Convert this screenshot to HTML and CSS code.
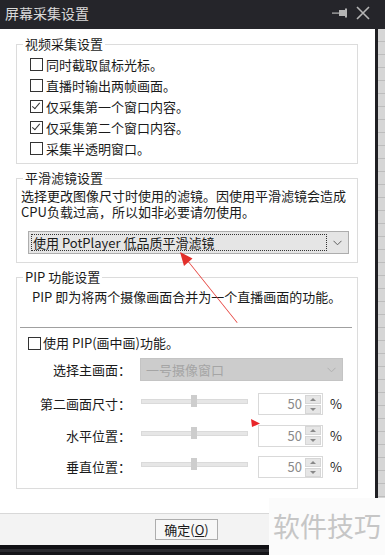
FILE: index.html
```html
<!DOCTYPE html>
<html lang="zh-CN">
<head>
    <meta charset="UTF-8">
    <meta name="viewport" content="width=device-width, initial-scale=1.0">
    <title>屏幕采集设置</title>
    <link rel="stylesheet" href="styles.css">
</head>
<body>
<div class="screen">
    <!-- 标题栏 -->
    <div class="titlebar">
        <span class="title">屏幕采集设置</span>
        <span class="tools">
            <svg class="pin" width="16" height="12" viewBox="0 0 16 12">
                <rect x="0" y="5.5" width="7" height="1.2" fill="#b5b5b5"/>
                <rect x="7" y="3" width="6" height="6" fill="#b5b5b5"/>
                <rect x="13" y="1.5" width="2" height="9" fill="#b5b5b5"/>
            </svg>
            <svg class="close" width="14" height="14" viewBox="0 0 14 14">
                <path d="M1 1 L13 13 M13 1 L1 13" stroke="#b5b5b5" stroke-width="1.6"/>
            </svg>
        </span>
    </div>

    <div class="middle">
        <div class="dialog">
            <div class="content">
                <!-- 视频采集 -->
                <fieldset class="group">
                    <legend>视频采集设置</legend>
                    <div class="checks">
                        <label class="check"><span class="box"></span>同时截取鼠标光标。</label>
                        <label class="check"><span class="box"></span>直播时输出两帧画面。</label>
                        <label class="check"><span class="box checked"></span>仅采集第一个窗口内容。</label>
                        <label class="check"><span class="box checked"></span>仅采集第二个窗口内容。</label>
                        <label class="check"><span class="box"></span>采集半透明窗口。</label>
                    </div>
                </fieldset>

                <!-- 平滑滤镜 -->
                <fieldset class="group group-filter">
                    <legend>平滑滤镜设置</legend>
                    <p class="desc">选择更改图像尺寸时使用的滤镜。因使用平滑滤镜会造成<br>CPU负载过高，所以如非必要请勿使用。</p>
                    <div class="combo">
                        <span class="combo-text">使用 PotPlayer 低品质平滑滤镜</span>
                        <svg class="chev" width="9" height="6" viewBox="0 0 9 6"><path d="M0.5 0.8 L4.5 4.8 L8.5 0.8" fill="none" stroke="#606060" stroke-width="1"/></svg>
                    </div>
                </fieldset>

                <!-- PIP -->
                <fieldset class="group group-pip">
                    <legend>PIP 功能设置</legend>
                    <p class="pip-desc">PIP 即为将两个摄像画面合并为一个直播画面的功能。</p>
                    <div class="sep"></div>
                    <label class="check check-pip"><span class="box"></span>使用 PIP(画中画)功能。</label>
                    <div class="field-row row-select">
                        <span class="lbl">选择主画面：</span>
                        <div class="combo combo-off">
                            <span class="combo-text">一号摄像窗口</span>
                            <svg class="chev" width="9" height="6" viewBox="0 0 9 6"><path d="M0.5 0.8 L4.5 4.8 L8.5 0.8" fill="none" stroke="#b0b0b0" stroke-width="1"/></svg>
                        </div>
                    </div>
                    <div class="sliders">
                        <div class="field-row">
                            <span class="lbl">第二画面尺寸：</span>
                            <div class="slider"><span class="track"></span><span class="thumb"></span></div>
                            <div class="spin"><span class="spin-val">50</span><span class="spin-btns"><span class="up"></span><span class="down"></span></span></div>
                            <span class="pct">%</span>
                        </div>
                        <div class="field-row">
                            <span class="lbl">水平位置：</span>
                            <div class="slider"><span class="track"></span><span class="thumb"></span></div>
                            <div class="spin"><span class="spin-val">50</span><span class="spin-btns"><span class="up"></span><span class="down"></span></span></div>
                            <span class="pct">%</span>
                        </div>
                        <div class="field-row">
                            <span class="lbl">垂直位置：</span>
                            <div class="slider"><span class="track"></span><span class="thumb"></span></div>
                            <div class="spin"><span class="spin-val">50</span><span class="spin-btns"><span class="up"></span><span class="down"></span></span></div>
                            <span class="pct">%</span>
                        </div>
                    </div>
                </fieldset>
            </div>
            <div class="footer">
                <button class="btn">确定(<u>O</u>)</button>
            </div>
        </div>
        <div class="edge"></div>
    </div>
    <div class="bottombar"></div>

    <!-- 红色标注 -->
    <svg class="marks" width="385" height="555" viewBox="0 0 385 555">
        <polygon points="180,252 192.5,258.5 184,266" fill="#e3302b"/>
        <polygon points="187,260.5 189.5,262.5 237.5,322.5 237,323" fill="#e3302b"/>
        <polygon points="251,419 260,423.5 252,427" fill="#e8262a"/>
    </svg>

    <div class="watermark">软件技巧</div>
</div>
</body>
</html>
```

FILE: styles.css
```css
/* Dasar */
body {
    margin: 0;
    font-family: "Noto Sans CJK SC", sans-serif;
    font-size: 13px;
    color: #1a1a1a;
}

.screen {
    position: relative;
    width: 385px;
    height: 555px;
    overflow: hidden;
    background-color: #ffffff;
}

/* Title bar */
.titlebar {
    height: 29px;
    background-color: #25252a;
    display: flex;
    align-items: center;
    justify-content: space-between;
}

.title {
    color: #dadada;
    font-size: 14px;
    line-height: 16px;
    margin-left: 5px;
    margin-top: -3px;
}

.tools {
    display: flex;
    align-items: center;
    margin-right: 15px;
    margin-top: -3px;
}

.pin {
    margin-right: 8px;
}

/* Badan dialog */
.middle {
    display: flex;
    height: 516px;
}

.dialog {
    width: 375px;
    display: flex;
    flex-direction: column;
}

.content {
    height: 484px;
    padding-top: 7px;
    box-sizing: border-box;
    background-color: #ffffff;
}

.edge {
    width: 7px;
    border-left: 3px solid #1f1f23;
    background: repeating-linear-gradient(180deg, #d6d6d6 0, #d6d6d6 12px, #bdbdbd 12px, #bdbdbd 13px);
}

/* Group box */
.group {
    margin: 0 17px 0 16px;
    padding: 0;
    border: 1px solid #dcdcdc;
    min-width: 0;
}

.group legend {
    margin-left: 6px;
    padding: 0 2px;
    line-height: 16px;
}

.group-filter,
.group-pip {
    margin-top: 6px;
}

.checks {
    padding: 2px 0 4px 13px;
}

.check {
    display: flex;
    align-items: center;
    height: 21px;
    line-height: 16px;
}

.box {
    width: 11px;
    height: 11px;
    border: 1px solid #333333;
    margin-right: 3px;
    position: relative;
    background-color: #ffffff;
}

.box.checked::after {
    content: "";
    position: absolute;
    left: 3px;
    top: 0px;
    width: 3px;
    height: 7px;
    border-right: 1px solid #333333;
    border-bottom: 1px solid #333333;
    transform: rotate(40deg);
}

/* Filter */
.desc {
    margin: 2px 0 0 4px;
    line-height: 16px;
    white-space: nowrap;
}

.combo {
    margin: 11px 0 8px 11px;
    width: 321px;
    height: 23px;
    box-sizing: border-box;
    border: 1px solid #adadad;
    background-color: #e5e5e5;
    display: flex;
    align-items: center;
    justify-content: space-between;
    padding: 0 6px 0 2px;
}

.combo-text {
    line-height: 17px;
    padding: 0 2px;
    width: 296px;
    box-sizing: border-box;
    outline: 1px dotted #333333;
    outline-offset: -1px;
}

/* PIP */
.pip-desc {
    margin: 4px 0 0 15px;
    line-height: 16px;
}

.sep {
    height: 1px;
    background-color: #a0a0a0;
    margin: 22px 5px 0 3px;
}

.check-pip {
    margin: 5px 0 0 11px;
    height: 20px;
}

.check-pip .box {
    margin-right: 2px;
}

.field-row {
    display: flex;
    align-items: center;
    height: 22px;
}

.row-select {
    height: 23px;
    margin-top: 5px;
}

.lbl {
    width: 114px;
    margin-right: 9px;
    text-align: right;
    line-height: 16px;
    white-space: nowrap;
}

.combo-off {
    margin: 0;
    width: 203px;
    border-color: #c4c4c4;
    background-color: #cccccc;
    padding-left: 3px;
}

.combo-off .combo-text {
    outline: none;
    color: #a5a5a5;
    width: auto;
}

.sliders {
    display: flex;
    flex-direction: column;
    gap: 9.5px;
    margin-top: 12px;
    padding-bottom: 10px;
}

.slider {
    position: relative;
    width: 107px;
    height: 22px;
    margin-left: 1px;
}

.track {
    position: absolute;
    left: 0;
    right: 0;
    top: 6px;
    height: 3px;
    background-color: #e6e6e6;
    border: 1px solid #dadada;
}

.thumb {
    position: absolute;
    left: 50px;
    top: 2px;
    width: 6px;
    height: 12px;
    background-color: #cdcdcd;
}

.spin {
    margin-left: 10px;
    width: 65px;
    height: 22px;
    box-sizing: border-box;
    border: 1px solid #d9d9d9;
    display: flex;
    align-items: center;
    justify-content: flex-end;
}

.spin-val {
    color: #8a8a8a;
    line-height: 16px;
    margin-right: 3px;
}

.spin-btns {
    display: flex;
    flex-direction: column;
    gap: 1px;
    width: 16px;
    margin-right: 1px;
}

.spin-btns span {
    height: 9px;
    background-color: #e6e6e6;
    border: 1px solid #d6d6d6;
    box-sizing: border-box;
    position: relative;
}

.spin-btns span::after {
    content: "";
    position: absolute;
    left: 4px;
    top: 2px;
    border-left: 3px solid transparent;
    border-right: 3px solid transparent;
}

.spin-btns .up::after {
    border-bottom: 3px solid #888888;
}

.spin-btns .down::after {
    border-top: 3px solid #888888;
}

.pct {
    margin-left: 7px;
    line-height: 16px;
    color: #222222;
}

/* Footer */
.footer {
    height: 32px;
    box-sizing: border-box;
    border-top: 1px solid #d8d8d8;
    background-color: #f3f3f3;
    padding: 5px 0 0 155px;
}

.btn {
    width: 63px;
    height: 21px;
    padding: 0;
    border: 1px solid #adadad;
    background-color: #f7f7f7;
    font-family: "Noto Sans CJK SC", sans-serif;
    font-size: 13px;
    line-height: 16px;
    color: #1a1a1a;
}

.bottombar {
    height: 10px;
    background: linear-gradient(180deg, #101014 0, #101014 4px, #2a2a2f 4px, #2a2a2f 7px, #151519 7px);
}

/* Overlay */
.marks {
    position: absolute;
    left: 0;
    top: 0;
    pointer-events: none;
}

.watermark {
    position: absolute;
    left: 269px;
    top: 498px;
    width: 116px;
    height: 57px;
    background-color: #fbfbfb;
    color: #c6c6c6;
    font-size: 27px;
    line-height: 30px;
    padding: 13px 0 0 4px;
    box-sizing: border-box;
    white-space: nowrap;
}
```
